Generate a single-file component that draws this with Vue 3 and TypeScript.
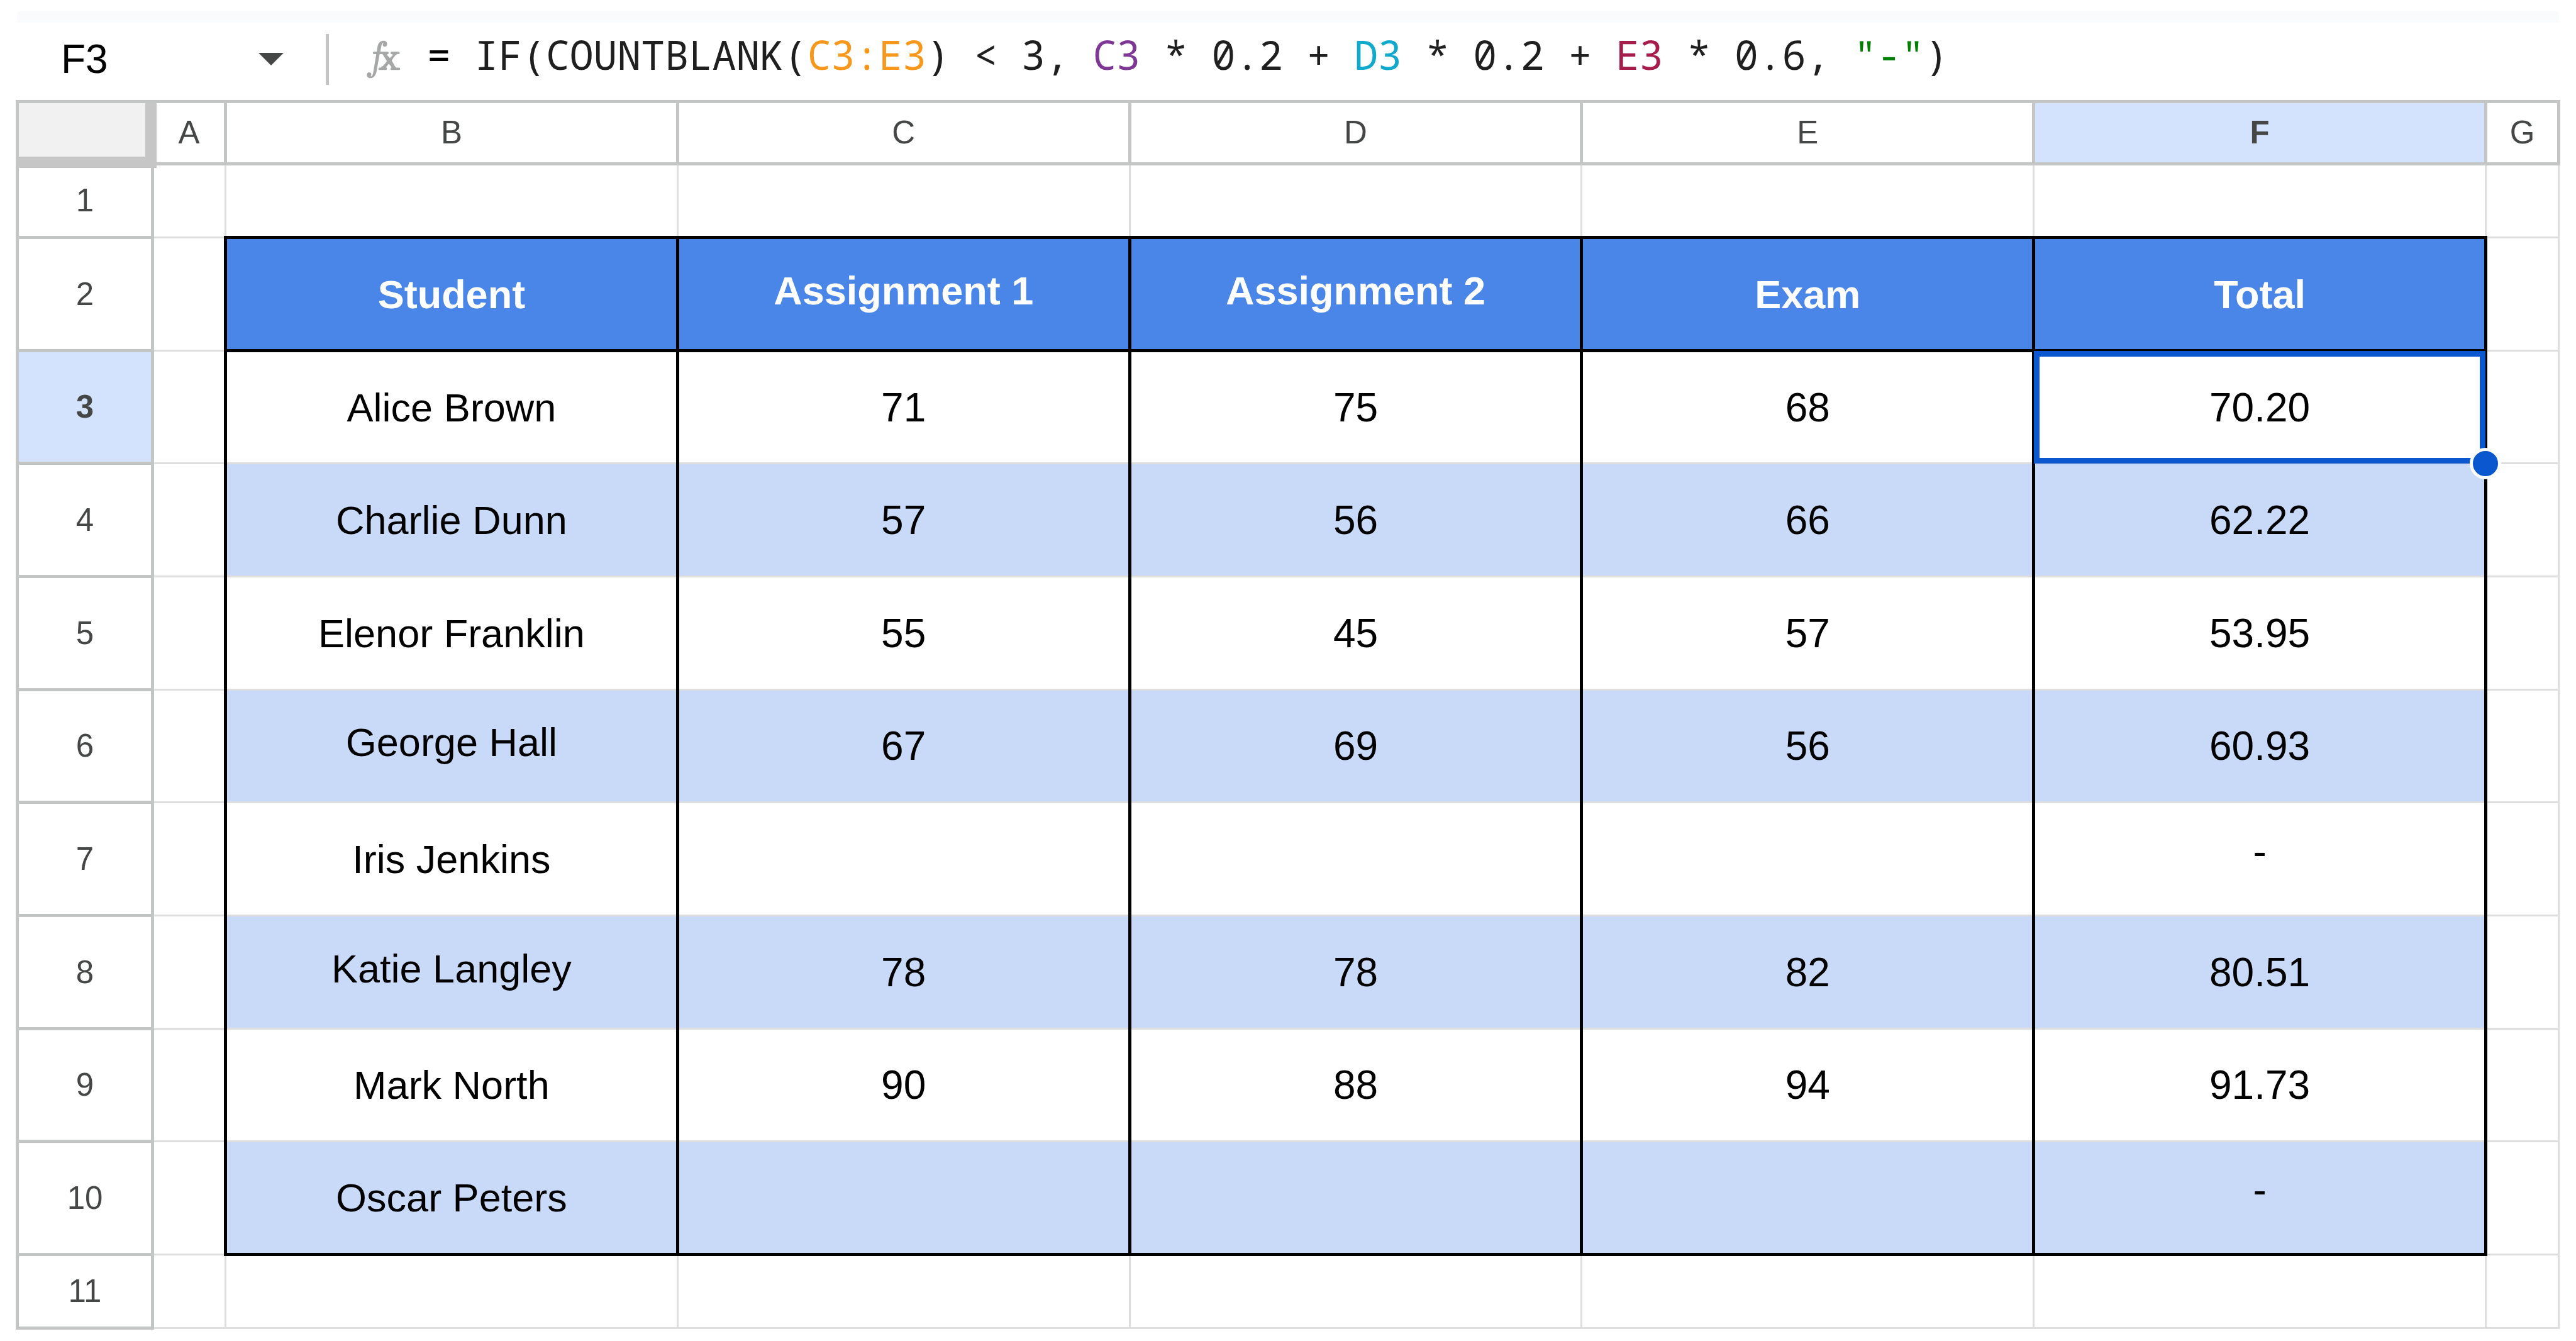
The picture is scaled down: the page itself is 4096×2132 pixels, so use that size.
<script setup lang="ts">
import { ref } from 'vue'

interface Token {
  text: string
  kind: 'equals' | 'plain' | 'orange' | 'purple' | 'cyan' | 'crimson' | 'string'
}

interface SheetRow {
  number: number
  kind: 'blank' | 'title' | 'data'
  cells: string[]
}

const columns = ['A', 'B', 'C', 'D', 'E', 'F', 'G']
const activeColumn = 5
const activeRow = 3
const cellName = ref('F3')

const formula: Token[] = [
  { text: '=', kind: 'equals' },
  { text: ' IF(COUNTBLANK(', kind: 'plain' },
  { text: 'C3:E3', kind: 'orange' },
  { text: ') < 3, ', kind: 'plain' },
  { text: 'C3', kind: 'purple' },
  { text: ' * 0.2 + ', kind: 'plain' },
  { text: 'D3', kind: 'cyan' },
  { text: ' * 0.2 + ', kind: 'plain' },
  { text: 'E3', kind: 'crimson' },
  { text: ' * 0.6, ', kind: 'plain' },
  { text: '"-"', kind: 'string' },
  { text: ')', kind: 'plain' },
]

const blank = ['', '', '', '', '']

const rows: SheetRow[] = [
  { number: 1, kind: 'blank', cells: blank },
  { number: 2, kind: 'title', cells: ['Student', 'Assignment 1', 'Assignment 2', 'Exam', 'Total'] },
  { number: 3, kind: 'data', cells: ['Alice Brown', '71', '75', '68', '70.20'] },
  { number: 4, kind: 'data', cells: ['Charlie Dunn', '57', '56', '66', '62.22'] },
  { number: 5, kind: 'data', cells: ['Elenor Franklin', '55', '45', '57', '53.95'] },
  { number: 6, kind: 'data', cells: ['George Hall', '67', '69', '56', '60.93'] },
  { number: 7, kind: 'data', cells: ['Iris Jenkins', '', '', '', '-'] },
  { number: 8, kind: 'data', cells: ['Katie Langley', '78', '78', '82', '80.51'] },
  { number: 9, kind: 'data', cells: ['Mark North', '90', '88', '94', '91.73'] },
  { number: 10, kind: 'data', cells: ['Oscar Peters', '', '', '', '-'] },
  { number: 11, kind: 'blank', cells: blank },
]

function isActive(row: SheetRow, index: number): boolean {
  return row.number === activeRow && index + 1 === activeColumn
}

function cellClasses(row: SheetRow, text: string, index: number) {
  return {
    cell: true,
    active: isActive(row, index),
    label: /[a-z]/.test(text),
    descends: /[gpqy]/.test(text),
    dash: text === '-',
  }
}
</script>

<template>
  <main class="sheet">
    <div class="band"></div>

    <div class="toolbar">
      <div class="name-box">
        <input v-model="cellName" class="name-input" type="text" aria-label="Name box" />
        <button class="name-menu" type="button" aria-label="Show named ranges">
          <svg class="arrow" viewBox="0 0 40 20" aria-hidden="true">
            <path d="M0 0H40L20 20Z" fill="#444746" />
          </svg>
        </button>
      </div>
      <span class="divider"></span>
      <svg class="fx" viewBox="75 35 220 248" aria-hidden="true">
        <g fill="#a5a8a6">
          <path
            d="M207 64C207 49 196 42 183 42C160 42 149 62 146 84L142 111H123C117 111 117 126 123 126H139L120 240C117 256 112 268 103 264C112 258 110 240 94 240C84 240 80 248 80 257C80 269 90 276 103 276C125 276 137 255 141 232L160 126H172V111H164L170 78C173 60 179 52 188 54C180 58 178 66 180 71C185 84 207 82 207 64Z"
          />
          <path
            d="M176 123L205 169Q188 199 168 208V214H204L201 207L217 186L234 206V214H272Q262 212 256 202L236 166Q252 134 274 124V118H232L243 131L224 150L206 130L210 118H172Z"
          />
          <rect x="158" y="111" width="58" height="15" rx="6" />
          <rect x="229" y="111" width="56" height="15" rx="6" />
          <rect x="153" y="210" width="53" height="15" rx="6" />
          <rect x="228" y="210" width="60" height="15" rx="6" />
        </g>
      </svg>
      <div class="formula" role="textbox" aria-label="Formula bar"><span
        v-for="(token, i) in formula"
        :key="i"
        :class="token.kind"
      >{{ token.text }}</span></div>
    </div>

    <table class="grid">
      <colgroup>
        <col class="col-numbers" />
        <col class="col-edge" />
        <col v-for="n in 5" :key="n" />
        <col class="col-edge" />
      </colgroup>
      <thead>
        <tr class="letters">
          <th class="corner">
            <button class="select-all" type="button" aria-label="Select all"></button>
          </th>
          <th
            v-for="(letter, i) in columns"
            :key="letter"
            scope="col"
            :class="{ current: i === activeColumn }"
          >{{ letter }}</th>
        </tr>
      </thead>
      <tbody>
        <tr v-for="row in rows" :key="row.number" :class="row.kind">
          <th scope="row" :class="{ current: row.number === activeRow }">{{ row.number }}</th>
          <td></td>
          <td
            v-for="(text, i) in row.cells"
            :key="i"
            :class="cellClasses(row, text, i)"
          >{{ text }}<span v-if="isActive(row, i)" class="selection"><span class="handle"></span></span></td>
          <td></td>
        </tr>
      </tbody>
    </table>
  </main>
</template>

<style>
body {
  background: #fff;
}
</style>

<style scoped>
.sheet {
  box-sizing: border-box;
  min-height: 100vh;
  padding: 18px 25px 0;
  background: #fff;
  font-family: "Liberation Sans", Arial, sans-serif;
  font-size: 64px;
  line-height: 74px;
  color: #000;
}

.band {
  height: 18px;
  margin: 0 2px;
  background: #f9fbfd;
}

.toolbar {
  display: flex;
  align-items: center;
  box-sizing: border-box;
  height: 123px;
  margin: 0 2px;
  padding-bottom: 7px;
}

.name-box {
  display: flex;
  align-items: center;
  box-sizing: border-box;
  width: 491px;
  padding: 0 67px 0 70px;
}

.name-input {
  flex: 1;
  min-width: 0;
  height: 74px;
  padding: 0;
  border: 0;
  outline: 0;
  background: transparent;
  font: inherit;
  color: inherit;
}

.name-menu {
  display: flex;
  padding: 0;
  border: 0;
  background: transparent;
}

.arrow {
  width: 40px;
  height: 20px;
}

.divider {
  width: 5px;
  height: 81px;
  background: #c4c6c5;
}

.fx {
  width: 56px;
  height: 63px;
  margin: 0 41px 0 59px;
}

.formula {
  flex: 1;
  padding-bottom: 15px;
  font-family: "Noto Sans Mono", "DejaVu Sans Mono", monospace;
  font-size: 63px;
  white-space: pre;
  color: #1f1f1f;
}

.equals { color: #000; }
.orange { color: #f7981d; }
.purple { color: #7e3794; }
.cyan { color: #11a9cc; }
.crimson { color: #a61d4c; }
.string { color: #008000; }

.grid {
  width: 100%;
  table-layout: fixed;
  border-collapse: collapse;
}

.col-numbers { width: 215px; }
.col-edge { width: 116px; }

th,
td {
  box-sizing: border-box;
  padding: 0;
  text-align: center;
  vertical-align: middle;
}

th {
  border: 5px solid #c4c6c5;
  font-size: 51px;
  line-height: 58px;
  font-weight: 400;
  color: #444746;
}

td {
  border: 3px solid #dedede;
}

.letters { height: 99px; }
.blank { height: 117px; }
.title,
.data { height: 180px; }
.data:nth-child(3n) { height: 179px; }

.current {
  background: #d3e3fd;
  font-weight: 700;
}

.title .cell,
.data .cell {
  border-left: 5px solid #000;
  border-right: 5px solid #000;
}

.title .cell {
  border-top: 5px solid #000;
  border-bottom: 5px solid #000;
  background: #4a86e8;
  font-weight: 700;
  color: #fff;
}

.data:nth-child(even) .cell {
  background: #c9daf8;
}

.data:nth-child(10) .cell {
  border-bottom: 5px solid #000;
}

.label { font-size: 63px; }
.descends { padding-bottom: 12px; }
.dash { padding-bottom: 24px; }

.corner,
.active {
  position: relative;
}

.select-all {
  position: absolute;
  inset: 0 -9px -9px 0;
  border: solid #c6c6c6;
  border-width: 0 18px 18px 0;
  background: #f1f1f1;
}

.selection {
  position: absolute;
  inset: -2px;
  border: 9px solid #0b57d0;
}

.handle {
  position: absolute;
  right: -34px;
  bottom: -34px;
  width: 40px;
  height: 40px;
  border: 5px solid #fff;
  border-radius: 50%;
  background: #0b57d0;
}
</style>
